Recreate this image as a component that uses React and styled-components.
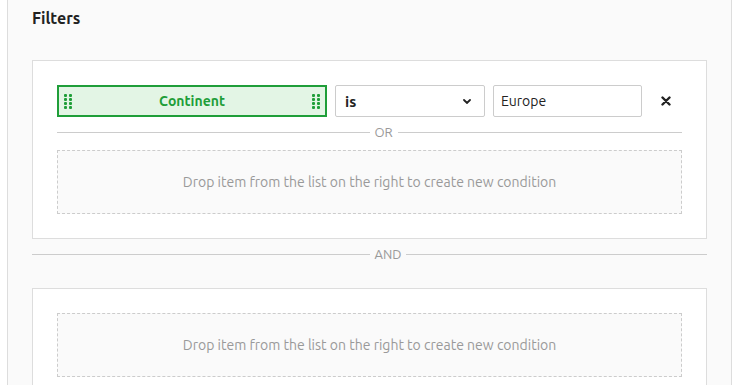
import React from "react";
import styled, { createGlobalStyle } from "styled-components";

const GlobalStyle = createGlobalStyle`
  html, body {
    margin: 0;
    padding: 0;
    background: #fff;
    font-family: "Ubuntu", Lato, "Open Sans", sans-serif;
  }
`;

const Page = styled.div`
  padding: 0 7px;
  height: 385px;
  overflow: hidden;
`;

const Panel = styled.section`
  background-color: #fafafa;
  border: 1px solid #ddd;
  border-top: none;
  padding: 8px 24px 24px;
  min-height: 400px;
`;

const Title = styled.h2`
  margin: 0 0 32px;
  font-size: 16px;
  line-height: 20px;
  font-weight: 700;
  color: #222;
`;

const Group = styled.div`
  background-color: #fff;
  border: 1px solid #ddd;
  padding: 24px;
  display: flex;
  flex-direction: column;
`;

const Row = styled.div`
  display: flex;
  align-items: stretch;
  gap: 8px;
  height: 32px;
`;

const Chip = styled.div`
  box-sizing: border-box;
  width: 270px;
  display: flex;
  align-items: center;
  justify-content: space-between;
  padding: 0 5px;
  border: 2px solid #1f9e39;
  background-color: #e3f5e5;
  color: #1f9e39;
  font-size: 14px;
  font-weight: 700;
`;

const Handle = styled.svg`
  width: 8px;
  height: 16px;
  flex: none;
`;

const Select = styled.div`
  box-sizing: border-box;
  width: 150px;
  display: flex;
  align-items: center;
  justify-content: space-between;
  padding: 0 13px 0 9px;
  border: 1px solid #ccc;
  border-radius: 2px;
  background: #fff;
  font-size: 15px;
  font-weight: 700;
  color: #222;
`;

const Input = styled.div`
  box-sizing: border-box;
  width: 149px;
  display: flex;
  align-items: center;
  padding: 0 7px;
  border: 1px solid #ccc;
  border-radius: 2px;
  font-size: 14px;
  color: #222;
`;

const Remove = styled.button`
  width: 32px;
  border: none;
  background: none;
  padding: 0;
  display: flex;
  align-items: center;
  justify-content: center;
  cursor: pointer;
`;

const Separator = styled.div`
  display: flex;
  align-items: center;
  gap: 5px;
  height: 16px;
  margin: ${(p) => p.$margin};
  font-size: 13px;
  color: #999;
  text-transform: uppercase;

  &::before,
  &::after {
    content: "";
    height: 1px;
    background-color: #ccc;
  }
  &::before {
    flex: 0 0 50%;
  }
  &::after {
    flex: 1;
  }
`;

const DropZone = styled.div`
  height: 64px;
  box-sizing: border-box;
  border: 1px dashed #ccc;
  background-color: #fafafa;
  display: flex;
  align-items: center;
  justify-content: center;
  font-size: 14px;
  color: #999;
`;

const Dots = () => (
  <Handle viewBox="0 0 8 16">
    {[0, 1, 2, 3].map((r) =>
      [0, 1].map((c) => (
        <rect key={`${r}-${c}`} x={c * 5} y={r * 4 + 1} width="3" height="3" rx="1" fill="#1f9e39" />
      ))
    )}
  </Handle>
);

const Chevron = () => (
  <svg width="8" height="5" viewBox="0 0 8 5">
    <path d="M1 1l3 3 3-3" fill="none" stroke="#222" strokeWidth="1.8" strokeLinecap="round" />
  </svg>
);

const Cross = () => (
  <svg width="10" height="10" viewBox="0 0 10 10">
    <path d="M1.5 1.5l7 7M8.5 1.5l-7 7" stroke="#222" strokeWidth="2.4" strokeLinecap="round" />
  </svg>
);

const DROP_TEXT = "Drop item from the list on the right to create new condition";

export default function App() {
  return (
    <>
      <GlobalStyle />
      <Page>
        <Panel>
          <Title>Filters</Title>
          <Group>
            <Row>
              <Chip>
                <Dots />
                Continent
                <Dots />
              </Chip>
              <Select>
                is
                <Chevron />
              </Select>
              <Input>Europe</Input>
              <Remove aria-label="Remove condition">
                <Cross />
              </Remove>
            </Row>
            <Separator $margin="7px 0 10px">OR</Separator>
            <DropZone>{DROP_TEXT}</DropZone>
          </Group>
          <Separator $margin="7px 0 26px">AND</Separator>
          <Group>
            <DropZone>{DROP_TEXT}</DropZone>
          </Group>
        </Panel>
      </Page>
    </>
  );
}
